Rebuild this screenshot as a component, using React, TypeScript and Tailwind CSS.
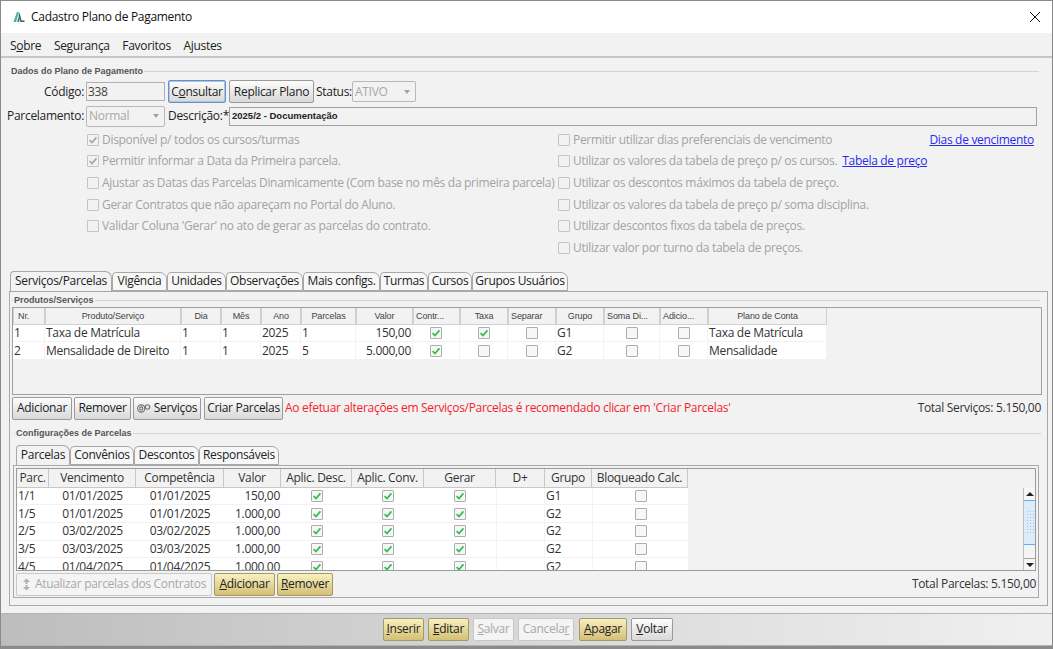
import React from "react";

const UI = "font-['Open_Sans',sans-serif]";
const SMALL = "font-['Liberation_Sans',Arial,sans-serif]";

function Check({ on, dim }: { on?: boolean; dim?: boolean }) {
  return (
    <span className={`inline-flex w-[12px] h-[12px] shrink-0 items-center justify-center rounded-[1px] border ${dim ? "border-[#c4c4c4] bg-[#f2f2f2]" : "border-[#adadad] bg-[#f7f7f7]"}`}>
      {on && (
        <svg width="10" height="10" viewBox="0 0 10 10" fill="none">
          <path d="M1.6 5.2 L4 7.6 L8.4 2.4" stroke={dim ? "#a8a8a8" : "#2fc04a"} strokeWidth="1.7" />
        </svg>
      )}
    </span>
  );
}

function Btn({ w, children, gold, dim, focus }: { w: string; children: React.ReactNode; gold?: boolean; dim?: boolean; focus?: boolean }) {
  let look = "border-[#9a9a9a] bg-gradient-to-b from-[#fdfdfd] to-[#d8d8d8] text-[#222]";
  if (gold) look = "border-[#a39a68] bg-gradient-to-b from-[#f8f0c0] to-[#d4c074] text-[#222]";
  if (dim) look = "border-[#c8c8c8] bg-[#f4f4f4] text-[#a8a8a8]";
  if (focus) look = "border-[#6b8fc4] bg-gradient-to-b from-[#fdfdfd] to-[#d8d8d8] text-[#222] ring-1 ring-inset ring-[#a9c5ea]";
  return (
    <button className={`${w} h-[23px] shrink-0 flex items-center justify-center rounded-[2px] border text-[12px] whitespace-nowrap ${look}`}>
      {children}
    </button>
  );
}

function Legend({ text, className }: { text: string; className?: string }) {
  return (
    <div className={`flex items-center ${className ?? ""}`}>
      <span className="w-[1px] h-[1px] bg-[#d0d0d0] shrink-0" />
      <span className={`${SMALL} pl-[1px] pr-[1px] text-[9px] font-bold leading-none tracking-normal text-[#555]`}>{text}</span>
      <span className="flex-1 h-[1px] bg-[#d4d4d4]" />
    </div>
  );
}

function Tab({ w, text, active, h }: { w: string; text: string; active?: boolean; h: string }) {
  return (
    <div className={`${w} ${h} shrink-0 flex items-center justify-center rounded-t-[4px] rounded-tr-[7px] border border-[#a8a8a8] text-[12px] text-[#222] ${active ? "border-b-0 bg-[#f2f2f2] z-10 mb-[-1px]" : "bg-[#f7f7f7]"}`}>
      {text}
    </div>
  );
}

function CheckRow({ on, text, children }: { on?: boolean; text: string; children?: React.ReactNode }) {
  return (
    <div className="h-[21.6px] flex items-center whitespace-nowrap">
      <Check on={on} dim />
      <span className="ml-[3px] text-[#a3a3a3]">{text}</span>
      {children}
    </div>
  );
}

function Select({ w, text }: { w: string; text: string }) {
  return (
    <div className={`${w} h-[21px] shrink-0 flex items-center justify-between rounded-[2px] border border-[#b8b8b8] pl-[2px] pr-[3px] text-[#a8a8a8]`}>
      <span>{text}</span>
      <span className="w-0 h-0 border-x-[3.5px] border-x-transparent border-t-[4px] border-t-[#a0a0a0] mr-[2px]" />
    </div>
  );
}

const prodCols = [
  { w: "w-[32px]", h: "Nr.", al: "text-left pl-[4px]" },
  { w: "w-[136px]", h: "Produto/Serviço", al: "text-center" },
  { w: "w-[40px]", h: "Dia", al: "text-center" },
  { w: "w-[40px]", h: "Mês", al: "text-center" },
  { w: "w-[40px]", h: "Ano", al: "text-center" },
  { w: "w-[55px]", h: "Parcelas", al: "text-center" },
  { w: "w-[57px]", h: "Valor", al: "text-center" },
  { w: "w-[47px]", h: "Contr...", al: "text-left pl-[2px]" },
  { w: "w-[48px]", h: "Taxa", al: "text-center" },
  { w: "w-[48px]", h: "Separar", al: "text-left pl-[2px]" },
  { w: "w-[48px]", h: "Grupo", al: "text-center" },
  { w: "w-[56px]", h: "Soma Di...", al: "text-left pl-[2px]" },
  { w: "w-[48px]", h: "Adicio...", al: "text-left pl-[2px]" },
  { w: "w-[119px]", h: "Plano de Conta", al: "text-center" },
];

const prodRows: (string | boolean)[][] = [
  ["1", "Taxa de Matrícula", "1", "1", "2025", "1", "150,00", true, true, false, "G1", false, false, "Taxa de Matrícula"],
  ["2", "Mensalidade de Direito", "1", "1", "2025", "5", "5.000,00", true, false, false, "G2", false, false, "Mensalidade"],
];

const parcCols = [
  { w: "w-[32px]", h: "Parc." },
  { w: "w-[87px]", h: "Vencimento" },
  { w: "w-[88px]", h: "Competência" },
  { w: "w-[57px]", h: "Valor" },
  { w: "w-[71px]", h: "Aplic. Desc." },
  { w: "w-[72px]", h: "Aplic. Conv." },
  { w: "w-[72px]", h: "Gerar" },
  { w: "w-[49px]", h: "D+" },
  { w: "w-[47px]", h: "Grupo" },
  { w: "w-[96px]", h: "Bloqueado Calc." },
];

const parcRows: [string, string, string, string, string][] = [
  ["1/1", "01/01/2025", "01/01/2025", "150,00", "G1"],
  ["1/5", "01/01/2025", "01/01/2025", "1.000,00", "G2"],
  ["2/5", "03/02/2025", "03/02/2025", "1.000,00", "G2"],
  ["3/5", "03/03/2025", "03/03/2025", "1.000,00", "G2"],
  ["4/5", "01/04/2025", "01/04/2025", "1.000,00", "G2"],
];

function ProdTable() {
  return (
    <div className="mr-[3px] h-[88px] border border-[#a0a0a0] bg-[#f2f2f2]">
      <div className="flex h-[17px]">
        {prodCols.map((c) => (
          <div key={c.h} className={`${c.w} ${c.al} ${SMALL} shrink-0 h-[17px] border-x border-b border-[#d0d0d0] bg-[#f2f2f2] text-[9px] leading-[16px] tracking-[-0.1px] text-[#444] whitespace-nowrap overflow-hidden`}>
            {c.h}
          </div>
        ))}
      </div>
      {prodRows.map((r, i) => (
        <div key={i} className="flex h-[17.67px] w-fit bg-white border-b border-[#f2f2f2]">
          {r.map((v, j) => (
            <div key={j} className={`${prodCols[j].w} shrink-0 flex items-center border-r border-[#f4f4f4] text-[#333] whitespace-nowrap ${typeof v === "boolean" ? "justify-center" : j === 6 ? "justify-end pr-[1px] pt-[1px]" : "pl-[1px] pt-[1px]"}`}>
              {typeof v === "boolean" ? <Check on={v} /> : v}
            </div>
          ))}
        </div>
      ))}
    </div>
  );
}

function ParcTable() {
  return (
    <div className="mx-[1px] mt-[2px] h-[103px] border border-[#9a9a9a] bg-[#f2f2f2] overflow-hidden">
      <div className="flex h-[19px]">
        {parcCols.map((c) => (
          <div key={c.h} className={`${c.w} shrink-0 h-[19px] flex items-center justify-center border-r border-b border-[#c8c8c8] text-[#333] whitespace-nowrap`}>
            {c.h}
          </div>
        ))}
      </div>
      <div className="flex justify-between">
        <div className="h-[83px] overflow-hidden">
          {parcRows.map((r) => (
            <div key={r[0]} className="flex w-fit h-[17.67px] bg-white border-b border-[#f2f2f2] text-[#333]">
              <div className={`${parcCols[0].w} pl-[1px] flex items-center`}>{r[0]}</div>
              <div className={`${parcCols[1].w} flex items-center justify-center`}>{r[1]}</div>
              <div className={`${parcCols[2].w} flex items-center justify-center`}>{r[2]}</div>
              <div className={`${parcCols[3].w} flex items-center justify-end pr-[1px]`}>{r[3]}</div>
              <div className={`${parcCols[4].w} flex items-center justify-center`}><Check on /></div>
              <div className={`${parcCols[5].w} flex items-center justify-center`}><Check on /></div>
              <div className={`${parcCols[6].w} flex items-center justify-center`}><Check on /></div>
              <div className={`${parcCols[7].w} border-x border-[#f4f4f4]`} />
              <div className={`${parcCols[8].w} pl-[1px] flex items-center`}>{r[4]}</div>
              <div className={`${parcCols[9].w} flex items-center justify-center border-l border-[#f4f4f4]`}><Check /></div>
            </div>
          ))}
        </div>
        <Scrollbar />
      </div>
    </div>
  );
}

function Scrollbar() {
  return (
    <div className="w-[12px] h-[83px] flex flex-col bg-[#f4f4f4] border-l border-[#bdbdbd]">
      <div className="h-[12px] flex items-center justify-center bg-[#f6f6f6]">
        <span className="w-0 h-0 border-x-[4px] border-x-transparent border-b-[4px] border-b-[#222]" />
      </div>
      <div className="h-[45px] flex items-center justify-center border-y border-[#62aef2] bg-[#dcecfb]">
        <div className="w-[8px] h-[24px] bg-[radial-gradient(#9cc4ea_1px,transparent_1px)] bg-[length:3px_3px]" />
      </div>
      <div className="flex-1 border-b border-[#a8a8a8]" />
      <div className="h-[12px] flex items-center justify-center bg-[#f6f6f6]">
        <span className="w-0 h-0 border-x-[4px] border-x-transparent border-t-[4px] border-t-[#222]" />
      </div>
    </div>
  );
}

export default function App() {
  return (
    <div className={`${UI} w-[1053px] h-[649px] overflow-hidden bg-[#8a8a8a] text-[12px] text-[#222] tracking-[-0.3px]`}>
      <div className="w-[1052px] h-[645px] mt-[1px] ml-[1px] flex flex-col bg-[#f2f2f2] border-r border-[#888]">
        {/* title bar */}
        <div className="h-[32px] shrink-0 flex items-center bg-white pl-[12px] pr-[10px]">
          <svg width="12" height="12" viewBox="0 0 12 12" className="mr-[6px]">
            <path d="M0.5 11 L4 1 H6 L3 11 Z" fill="#3cb6a0" />
            <path d="M4 11 L6 4.5 L7 7 L6 11 Z" fill="#2a8f84" />
            <path d="M6.6 1.5 L8.5 9.5 L11.5 9.5 L11.5 11 L7.5 11 L5.6 4 Z" fill="#555" />
          </svg>
          <span className="text-[12px] text-[#111]">Cadastro Plano de Pagamento</span>
          <svg width="12" height="12" viewBox="0 0 12 12" className="ml-auto mr-[1px]" fill="none">
            <path d="M1 1 L11 11 M11 1 L1 11" stroke="#111" strokeWidth="1" />
          </svg>
        </div>

        {/* menu */}
        <div className="h-[25px] shrink-0 flex items-center gap-[12.6px] pl-[9px] pt-[2px] border-b-2 border-[#c6c6c6]">
          <span>S<u>o</u>bre</span>
          <span>Segurança</span>
          <span>Favoritos</span>
          <span>Ajustes</span>
        </div>

        {/* dados do plano */}
        <div className="pl-[6px] pr-[15px] pt-[9px]">
          <Legend text="Dados do Plano de Pagamento" className="ml-[2px] mr-[-2px]" />
          <div className="mt-[4px] flex items-center h-[23px]">
            <span className="w-[77px] text-right">Código:</span>
            <div className="w-[79px] h-[19px] ml-[2px] flex items-center border border-[#b0b0b0] pl-[1px] text-[#444]">338</div>
            <div className="ml-[3px] flex gap-[3px]">
              <Btn w="w-[58px]" focus>C<u>o</u>nsultar</Btn>
              <Btn w="w-[85px]">Replicar Plano</Btn>
            </div>
            <span className="ml-[2px] w-[36px]">Status:</span>
            <Select w="w-[64px]" text="ATIVO" />
          </div>
          <div className="mt-[2px] flex items-center h-[22px]">
            <span className="w-[77px] text-right whitespace-nowrap">Parcelamento:</span>
            <div className="ml-[2px]"><Select w="w-[79px]" text="Normal" /></div>
            <span className="ml-[3px] w-[61px] whitespace-nowrap">Descrição:*</span>
            <div className={`${SMALL} flex-1 h-[19px] flex items-center border border-[#a0a0a0] pl-[2px] text-[9.5px] font-bold tracking-normal text-[#222]`}>2025/2 - Documentação</div>
          </div>

          {/* opcoes */}
          <div className="mt-[2px] flex">
            <div className="ml-[80px] w-[471px]">
              <CheckRow on text="Disponível p/ todos os cursos/turmas" />
              <CheckRow on text="Permitir informar a Data da Primeira parcela." />
              <CheckRow text="Ajustar as Datas das Parcelas Dinamicamente (Com base no mês da primeira parcela)" />
              <CheckRow text="Gerar Contratos que não apareçam no Portal do Aluno." />
              <CheckRow text="Validar Coluna 'Gerar' no ato de gerar as parcelas do contrato." />
            </div>
            <div className="flex-1">
              <CheckRow text="Permitir utilizar dias preferenciais de vencimento">
                <span className="ml-auto mr-[3px] text-[#2a2af0] underline">Dias de vencimento</span>
              </CheckRow>
              <CheckRow text="Utilizar os valores da tabela de preço p/ os cursos.">
                <span className="ml-[5px] text-[#2a2af0] underline">Tabela de preço</span>
              </CheckRow>
              <CheckRow text="Utilizar os descontos máximos da tabela de preço." />
              <CheckRow text="Utilizar os valores da tabela de preço p/ soma disciplina." />
              <CheckRow text="Utilizar descontos fixos da tabela de preços." />
              <CheckRow text="Utilizar valor por turno da tabela de preços." />
            </div>
          </div>
        </div>

        {/* abas principais */}
        <div className="mt-[12px] pl-[8px] pr-[4px]">
          <div className="flex pl-[1px]">
            <Tab h="h-[20px]" w="w-[102px]" text="Serviços/Parcelas" active />
            <Tab h="h-[19px] mt-[1px]" w="w-[55px]" text="Vigência" />
            <Tab h="h-[19px] mt-[1px]" w="w-[59px]" text="Unidades" />
            <Tab h="h-[19px] mt-[1px]" w="w-[77px]" text="Observações" />
            <Tab h="h-[19px] mt-[1px]" w="w-[77px]" text="Mais configs." />
            <Tab h="h-[19px] mt-[1px]" w="w-[48px]" text="Turmas" />
            <Tab h="h-[19px] mt-[1px]" w="w-[44px]" text="Cursos" />
            <Tab h="h-[19px] mt-[1px]" w="w-[96px]" text="Grupos Usuários" />
          </div>
          <div className="h-[315px] border border-[#a8a8a8] px-[2px] pt-[3px]">
            <Legend text="Produtos/Serviços" className="h-[12px] mr-[5px]" />
            <ProdTable />
            <div className="mt-[2px] mr-[4px] flex items-center h-[23px]">
              <Btn w="w-[60px]">Adicionar</Btn>
              <div className="ml-[2px]"><Btn w="w-[57px]">Remover</Btn></div>
              <div className="ml-[2px]">
                <Btn w="w-[68px]">
                  <svg width="14" height="9" viewBox="0 0 14 9" className="mr-[3px]" fill="none" stroke="#6f6f6f" strokeWidth="1.1">
                    <circle cx="4.2" cy="4.5" r="3.6" />
                    <circle cx="4.2" cy="4.5" r="1.6" />
                    <circle cx="10.5" cy="3" r="2.2" />
                  </svg>
                  Serviços
                </Btn>
              </div>
              <div className="ml-[3px]"><Btn w="w-[79px]">Criar Parcelas</Btn></div>
              <span className="ml-[2px] text-[#f5222d] whitespace-nowrap">Ao efetuar alterações em Serviços/Parcelas é recomendado clicar em 'Criar Parcelas'</span>
              <span className="ml-auto whitespace-nowrap text-[#333]">Total Serviços: 5.150,00</span>
            </div>
            <Legend text="Configurações de Parcelas" className="mt-[8px] h-[12px] ml-[2px] mr-[4px]" />
            {/* abas parcelas */}
            <div className="mt-[5px] ml-[1px] mr-[6px]">
              <div className="flex pl-[3px]">
                <Tab h="h-[20px]" w="w-[54px]" text="Parcelas" active />
                <Tab h="h-[19px] mt-[1px]" w="w-[64px]" text="Convênios" />
                <Tab h="h-[19px] mt-[1px]" w="w-[65px]" text="Descontos" />
                <Tab h="h-[19px] mt-[1px]" w="w-[80px]" text="Responsáveis" />
              </div>
              <div className="h-[133px] border border-[#a8a8a8] px-[1px]">
                <ParcTable />
                <div className="mt-[2px] mr-[1px] flex items-center h-[23px]">
                  <div className="ml-[1px]">
                    <Btn w="w-[196px]" dim>
                      <svg width="9" height="13" viewBox="0 0 9 13" className="mr-[4px]" fill="#b0b0b0">
                        <path d="M4.5 0.5 L8 4 H1 Z" />
                        <path d="M3.5 4 H5.5 V6 H3.5 Z" />
                        <path d="M4.5 12.5 L1 9 H8 Z" />
                        <path d="M3.5 7 H5.5 V9 H3.5 Z" />
                      </svg>
                      Atualizar parcelas dos Contratos
                    </Btn>
                  </div>
                  <div className="ml-[2px]"><Btn w="w-[61px]" gold><u>A</u>dicionar</Btn></div>
                  <div className="ml-[2px]"><Btn w="w-[56px]" gold><u>R</u>emover</Btn></div>
                  <span className="ml-auto whitespace-nowrap text-[#333]">Total Parcelas: 5.150,00</span>
                </div>
              </div>
            </div>
          </div>
        </div>

        {/* rodape */}
        <div className="mt-[7px] flex-1 flex items-center pl-[382px] border-y border-[#b4b4b4] bg-gradient-to-r from-[#bdbdbd] via-[#d8d8d8] to-[#f0f0f0]">
          <div className="flex">
            <Btn w="w-[41px]" gold><u>I</u>nserir</Btn>
            <div className="ml-[4px]"><Btn w="w-[41px]" gold><u>E</u>ditar</Btn></div>
            <div className="ml-[4px]"><Btn w="w-[41px]" dim><u>S</u>alvar</Btn></div>
            <div className="ml-[4px]"><Btn w="w-[56px]" dim>Cancela<u>r</u></Btn></div>
            <div className="ml-[5px]"><Btn w="w-[48px]" gold><u>A</u>pagar</Btn></div>
            <div className="ml-[4px]"><Btn w="w-[42px]"><u>V</u>oltar</Btn></div>
          </div>
        </div>
      </div>
    </div>
  );
}
